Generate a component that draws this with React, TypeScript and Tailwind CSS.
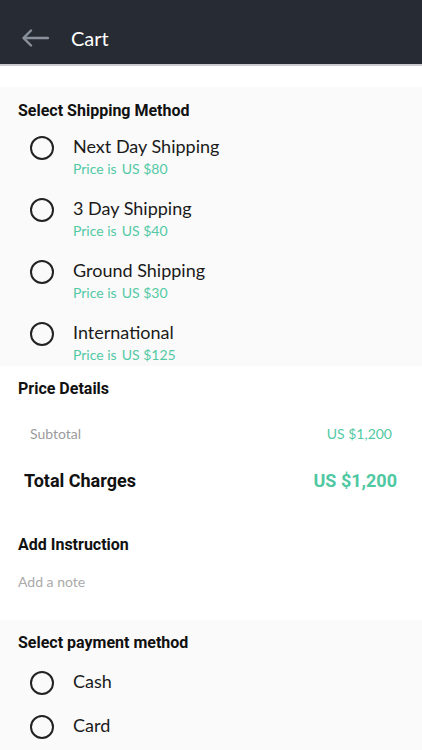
import React from 'react';

const shipping = [
  { name: 'Next Day Shipping', price: 'US $80' },
  { name: '3 Day Shipping', price: 'US $40' },
  { name: 'Ground Shipping', price: 'US $30' },
  { name: 'International', price: 'US $125' },
];

function Radio() {
  return (
    <span className="relative top-[2px] block w-[24px] h-[24px] rounded-full border-[2.5px] border-[#222222] shrink-0" />
  );
}

const heading = 'text-[16px] leading-[20px] font-bold text-[#111]';
const roboto = { fontFamily: 'Roboto, sans-serif' };

export default function App() {
  return (
    <div className="w-[422px] h-[750px] bg-white overflow-hidden" style={{ fontFamily: 'Lato, sans-serif' }}>
      {/* header */}
      <div className="h-[66px] bg-[#272b33] border-b-2 border-[#c9cbce] flex items-center pt-[12px] pl-[22px]">
        <svg width="27" height="18" viewBox="0 0 27 18" fill="none" stroke="#8a919c" strokeWidth="2.4" strokeLinecap="round" strokeLinejoin="round">
          <path d="M26 9H2" />
          <path d="M9 1.5 1.5 9 9 16.5" />
        </svg>
        <span className="ml-[22px] text-[20px] text-white">Cart</span>
      </div>

      {/* shipping */}
      <div className="mt-[21px] bg-[#fafafa] pt-[14px] pb-[2px] pl-[18px]">
        <h2 className={heading} style={roboto}>
          Select Shipping Method
        </h2>
        <div className="mt-[13px] flex flex-col gap-[18px] pl-[12px]">
          {shipping.map((s) => (
            <div key={s.name} className="flex flex-col">
              <div className="flex items-center h-[24px]">
                <Radio />
                <span className="ml-[19px] text-[18px] leading-[24px] text-[#1a1a1a]">{s.name}</span>
              </div>
              <div className="mt-[2px] ml-[43px] text-[14px] leading-[18px] text-[#52c9a4]">
                Price is<span className="ml-[5px]">{s.price}</span>
              </div>
            </div>
          ))}
        </div>
      </div>

      {/* price details */}
      <div className="mt-[13px] px-[18px]">
        <h2 className={heading} style={roboto}>
          Price Details
        </h2>
        <div className="mt-[26px] flex justify-between pl-[12px] pr-[12px] text-[14px] leading-[18px]">
          <span className="text-[#9b9b9b]">Subtotal</span>
          <span className="text-[#52c9a4]">US $1,200</span>
        </div>
        <div className="mt-[26px] flex justify-between pl-[6px] pr-[7px] text-[18px] leading-[24px] font-bold" style={roboto}>
          <span className="text-[#111]">Total Charges</span>
          <span className="text-[#4fc8a2]">US $1,200</span>
        </div>

        <h2 className={`mt-[42px] ${heading}`} style={roboto}>
          Add Instruction
        </h2>
        <div className="mt-[18px] text-[14px] leading-[18px] text-[#aaaaaa]">Add a note</div>
      </div>

      {/* payment */}
      <div className="mt-[29px] bg-[#fafafa] pt-[13px] pl-[18px] h-[200px]">
        <h2 className={heading} style={roboto}>
          Select payment method
        </h2>
        <div className="mt-[16px] flex flex-col gap-[20px] pl-[12px]">
          {['Cash', 'Card'].map((p) => (
            <div key={p} className="flex items-center h-[24px]">
              <Radio />
              <span className="ml-[19px] text-[18px] leading-[24px] text-[#1a1a1a]">{p}</span>
            </div>
          ))}
        </div>
      </div>
    </div>
  );
}
